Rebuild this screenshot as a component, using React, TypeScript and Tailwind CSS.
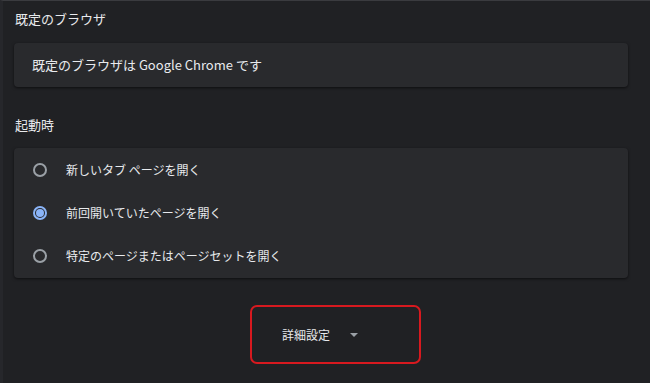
import React from "react";

const font = { fontFamily: '"Noto Sans CJK JP", "Noto Sans", Roboto, sans-serif' };

function Radio({ checked }: { checked?: boolean }) {
  if (checked) {
    return (
      <span className="flex h-[14px] w-[14px] items-center justify-center rounded-full border-2 border-[#8ab4f8]">
        <span className="h-[8px] w-[8px] rounded-full bg-[#8ab4f8]" />
      </span>
    );
  }
  return <span className="h-[14px] w-[14px] rounded-full border-2 border-[#9aa0a6]" />;
}

function Option({ label, checked }: { label: string; checked?: boolean }) {
  return (
    <div className="flex h-[43px] items-center">
      <div className="flex w-[52px] justify-center">
        <Radio checked={checked} />
      </div>
      <span className="text-[12px] text-[#e8eaed]">{label}</span>
    </div>
  );
}

export default function App() {
  return (
    <div
      className="flex h-[383px] w-[650px] flex-col overflow-hidden border-l-[3px] border-t border-l-[#26272b] border-t-[#3a3b3f] bg-[#202124] pl-[11px] pr-[22px]"
      style={font}
    >
      <div className="flex h-[42px] items-center pb-[6px] pl-[1px] text-[13px] text-[#e8eaed]">既定のブラウザ</div>
      <div className="flex h-[44px] items-center rounded-[4px] bg-[#292a2d] pl-[18px] text-[13px] text-[#e8eaed] shadow-[0_1px_3px_rgba(0,0,0,0.6)]">
        既定のブラウザは Google Chrome です
      </div>
      <div className="flex h-[61px] items-center pt-[14px] pl-[1px] text-[13px] text-[#e8eaed]">起動時</div>
      <div className="flex h-[130px] flex-col rounded-[4px] bg-[#292a2d] shadow-[0_1px_3px_rgba(0,0,0,0.6)]">
        <Option label="新しいタブ ページを開く" />
        <Option label="前回開いていたページを開く" checked />
        <Option label="特定のページまたはページセットを開く" />
      </div>
      <div className="flex justify-center pt-[27px] pl-[29px]">
        <div className="flex h-[59px] w-[171px] items-center rounded-[7px] border-2 border-[#d7191f] pl-[30px]">
          <span className="text-[12px] text-[#e8eaed]">詳細設定</span>
          <svg className="ml-[19px]" width="10" height="6" viewBox="0 0 10 6">
            <path d="M1 1 L5 5 L9 1 Z" fill="#9aa0a6" />
          </svg>
        </div>
      </div>
    </div>
  );
}
